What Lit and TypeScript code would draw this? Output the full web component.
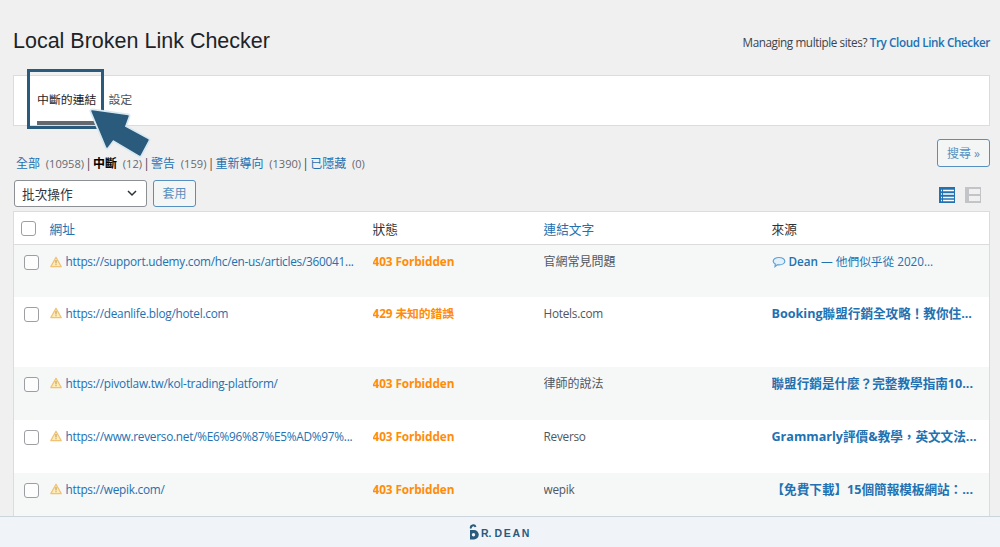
import { LitElement, html, css, svg } from "lit";
import { customElement } from "lit/decorators.js";

const warn = svg`<svg class="warn" width="12" height="12" viewBox="0 0 12 12"><path d="M6 1.200 11.200 10.600H.8Z" fill="#fdecb8" stroke="#f2c173" stroke-width="1.200" stroke-linejoin="round"/><path d="M6 4v3.400M6 8.200v1" stroke="#a58a4c" stroke-width=".9"/></svg>`;
const bubble = svg`<svg class="bubble" width="14" height="12" viewBox="0 0 14 12"><path d="M7 1.500c3.200 0 5.800 1.600 5.800 3.700S10.200 8.900 7 8.900c-.6 0-1.200 0-1.700-.2L3 10.600l.3-2.600C2 7.300 1.200 6.300 1.200 5.200 1.200 3.100 3.800 1.500 7 1.500Z" fill="#e3f0fa" stroke="#5ba3d8" stroke-width="1.200"/></svg>`;

const rows = [
  { url: "https://support.udemy.com/hc/en-us/articles/360041...", st: "403 Forbidden", text: "官網常見問題", cjk: true, src: "Dean — 他們似乎從 2020...", plain: true, h: 52 },
  { url: "https://deanlife.blog/hotel.com", st: "429 未知的錯誤", text: "Hotels.com", src: "Booking聯盟行銷全攻略！教你住...", h: 70 },
  { url: "https://pivotlaw.tw/kol-trading-platform/", st: "403 Forbidden", text: "律師的說法", cjk: true, src: "聯盟行銷是什麼？完整教學指南10...", h: 53 },
  { url: "https://www.reverso.net/%E6%96%87%E5%AD%97%...", st: "403 Forbidden", text: "Reverso", src: "Grammarly評價&教學，英文文法...", h: 53 },
  { url: "https://wepik.com/", st: "403 Forbidden", text: "wepik", src: "【免費下載】15個簡報模板網站：...", h: 53 },
];

@customElement("app-root")
export class AppRoot extends LitElement {
  static styles = css`
    :host { display: block; position: relative; width: 1000px; height: 547px; overflow: hidden; background: #f0f0f1; color: #3c434a;
      font-family: "Open Sans", "Noto Sans CJK TC", sans-serif; font-size: 12px; }
    a { color: #2271b1; text-decoration: none; }
    .page { padding: 0 10px 0 13px; display: flex; flex-direction: column; }
    .top { display: flex; justify-content: space-between; align-items: center; height: 75px; padding-top: 8px; box-sizing: border-box; }
    h1 { margin: -2px 0 0; font: 400 21.500px/26px "Liberation Sans", sans-serif; color: #1d2327; }
    .promo { font-size: 11.700px; color: #3c434a; letter-spacing: -.4px; }
    .promo a { font-weight: 600; color: #2271b1; }
    .tabs { height: 51px; box-sizing: border-box; background: #fff; border: 1px solid #dcdcde; display: flex; padding-left: 23px; gap: 12px; }
    .tab { display: flex; align-items: center; height: 100%; box-sizing: border-box; padding-bottom: 4px; color: #50575e; font-size: 11.900px; position: relative; }
    .tab.on { color: #1d2327; }
    .tab.on::after { content: ""; position: absolute; left: 0; right: 0; bottom: 0; height: 4px; background: #646970; }
    .filters { display: flex; justify-content: space-between; align-items: flex-start; height: 53px; padding: 13px 0 0 3px; box-sizing: border-box; }
    .views { margin-top: 15px; font-size: 12px; color: #3c434a; white-space: pre; }
    .views .n { color: #646970; font-size: 11.100px; }
    .views b { color: #000; font-weight: 700; }
    .sep { display: inline-block; width: 9px; text-align: center; }
    .btn { height: 28px; box-sizing: border-box; border: 1px solid #2271b1; border-radius: 3px; background: #f6f7f7; color: #2271b1; font-size: 12px; display: flex; align-items: center; justify-content: center; opacity: .75; }
    .search { width: 53px; }
    .actions { display: flex; justify-content: space-between; align-items: center; height: 28px; padding-left: 1px; }
    .left { display: flex; gap: 6px; }
    .select { width: 133px; height: 27px; box-sizing: border-box; border: 1px solid #8c8f94; border-radius: 3px; background: #fff; display: flex; justify-content: space-between; align-items: center; padding: 0 8px 0 7px; color: #2c3338; font-size: 12.700px; }
    .apply { width: 43px; height: 27px; }
    .modes { display: flex; gap: 8px; margin-top: 4px; margin-right: 8px; }
    .modes svg { display: block; }
    table { margin-top: 4px; width: 977px; border-collapse: collapse; table-layout: fixed; background: #fff; border: 1px solid #dcdcde; border-bottom: 0; }
    th { height: 32px; padding: 0; font-weight: 400; font-size: 12.700px; text-align: left; color: #2c3338; border-bottom: 1px solid #dcdcde; }
    td { padding: 8px 0 0; vertical-align: top; font-size: 11.800px; letter-spacing: -.25px; line-height: 17px; white-space: nowrap; overflow: hidden; }
    tr.odd td { background: #f6f7f7; }
    .cb { display: block; box-sizing: border-box; width: 15px; height: 15px; border: 1px solid #8c8f94; border-radius: 3px; background: #fff; opacity: .85; }
    th.c0 { padding-left: 7px; }
    td.c0 { padding: 10px 0 0 10px; }
    .urlc { display: flex; align-items: center; gap: 4px; }
    .warn, .bubble { flex: none; display: block; }
    td.st { color: #ff8c0a; font-weight: 700; font-size: 11.800px; letter-spacing: -.1px; }
    td.tx { color: #50575e; }
    td.tx.cjk { font-size: 12px; letter-spacing: 0; }
    .src { font-weight: 700; font-size: 12.600px; letter-spacing: 0; color: #2271b1; }
    .src.plain { font-weight: 600; font-size: 11.700px; display: flex; align-items: center; gap: 3px; }
    .src.plain i { font-style: normal; font-weight: 400; }
    .foot { position: absolute; left: 0; right: 0; bottom: 0; height: 31px; background: #f0f4f8; border-top: 1px solid #cdd5dc; box-sizing: border-box; display: flex; align-items: center; justify-content: center; gap: 2px; color: #2a5a7c; font: 700 10.500px "Liberation Sans", sans-serif; }
    .foot span { line-height: 1; padding-top: 3px; }
    .foot span span { padding: 0; letter-spacing: 1.700px; }
    .hl { position: absolute; left: 27px; top: 69px; width: 77px; height: 60px; box-sizing: border-box; border: 3px solid #2a5a7c; }
    .arrow { position: absolute; left: 86px; top: 104px; }
  `;

  render() {
    const sep = html`<span class="sep">|</span>`;
    return html`
      <div class="page">
        <div class="top">
          <h1>Local Broken Link Checker</h1>
          <div class="promo">Managing multiple sites? <a href="#">Try Cloud Link Checker</a></div>
        </div>
        <div class="tabs">
          <div class="tab on">中斷的連結</div>
          <div class="tab">設定</div>
        </div>
        <div class="filters">
          <div class="views"><a href="#">全部</a><span class="n">  (10958)</span>${sep}<b>中斷</b><span class="n">  (12)</span>${sep}<a href="#">警告</a><span class="n">  (159)</span>${sep}<a href="#">重新導向</a><span class="n">  (1390)</span>${sep}<a href="#">已隱藏</a><span class="n">  (0)</span></div>
          <div class="btn search">搜尋 »</div>
        </div>
        <div class="actions">
          <div class="left">
            <div class="select">批次操作
              <svg width="12" height="8" viewBox="0 0 12 8"><path d="M2 2l4 4 4-4" fill="none" stroke="#2c3338" stroke-width="1.500"/></svg>
            </div>
            <div class="btn apply">套用</div>
          </div>
          <div class="modes">
            <svg width="18" height="18" viewBox="0 0 18 18"><path d="M1 1h16v16H1z" fill="#2271b1"/><path d="M3 4.500h1M5 4.500h11M3 8h1M5 8h11M3 11.500h1M5 11.500h11M3 14.500h1M5 14.500h11" stroke="#fff" stroke-width="1.300"/></svg>
            <svg width="18" height="18" viewBox="0 0 18 18"><path d="M1 1h16v16H1z" fill="#c3c4c7"/><path d="M5 3h11v5H5zM5 10h11v5H5z" fill="#f0f0f1"/></svg>
          </div>
        </div>
        <table>
          <colgroup><col style="width:36px"/><col style="width:323px"/><col style="width:171px"/><col style="width:228px"/><col/></colgroup>
          <thead>
            <tr>
              <th class="c0"><span class="cb"></span></th>
              <th><a href="#">網址</a></th>
              <th>狀態</th>
              <th><a href="#">連結文字</a></th>
              <th>來源</th>
            </tr>
          </thead>
          <tbody>
            ${rows.map((r, i) => html`
              <tr class=${i % 2 === 0 ? "odd" : ""} style="height:${r.h}px">
                <td class="c0"><span class="cb"></span></td>
                <td><div class="urlc">${warn}<a href="#">${r.url}</a></div></td>
                <td class="st">${r.st}</td>
                <td class="tx ${r.cjk ? "cjk" : ""}">${r.text}</td>
                <td>${r.plain
                  ? html`<div class="src plain">${bubble}<a href="#">Dean <i>— 他們似乎從 2020...</i></a></div>`
                  : html`<a class="src" href="#">${r.src}</a>`}</td>
              </tr>`)}
          </tbody>
        </table>
      </div>
      <div class="hl"></div>
      <svg class="arrow" width="68" height="56" viewBox="0 0 68 56">
        <path d="M6 7 L42 12 L38 23 L62 36 L54 51 L27 35 L21 43 Z" fill="#2a5a7c" stroke="#d8e8f0" stroke-width="5" stroke-linejoin="round"/>
        <path d="M6 7 L42 12 L38 23 L62 36 L54 51 L27 35 L21 43 Z" fill="#2a5a7c" stroke="#2a5a7c" stroke-width="1.500" stroke-linejoin="round"/>
      </svg>
      <div class="foot">
        <svg width="10" height="16" viewBox="0 0 10 16"><path d="M1 6h4a4.500 4.500 0 0 1 0 9.500H1z" fill="#2a5a7c"/><circle cx="4.500" cy="10.700" r="1.700" fill="#f0f4f8"/><path d="M2 4.500a2.300 2.300 0 0 1 4.500-1.500" fill="none" stroke="#2a5a7c" stroke-width="2"/></svg>
        <span>R. <span>DEAN</span></span>
      </div>
    `;
  }
}
